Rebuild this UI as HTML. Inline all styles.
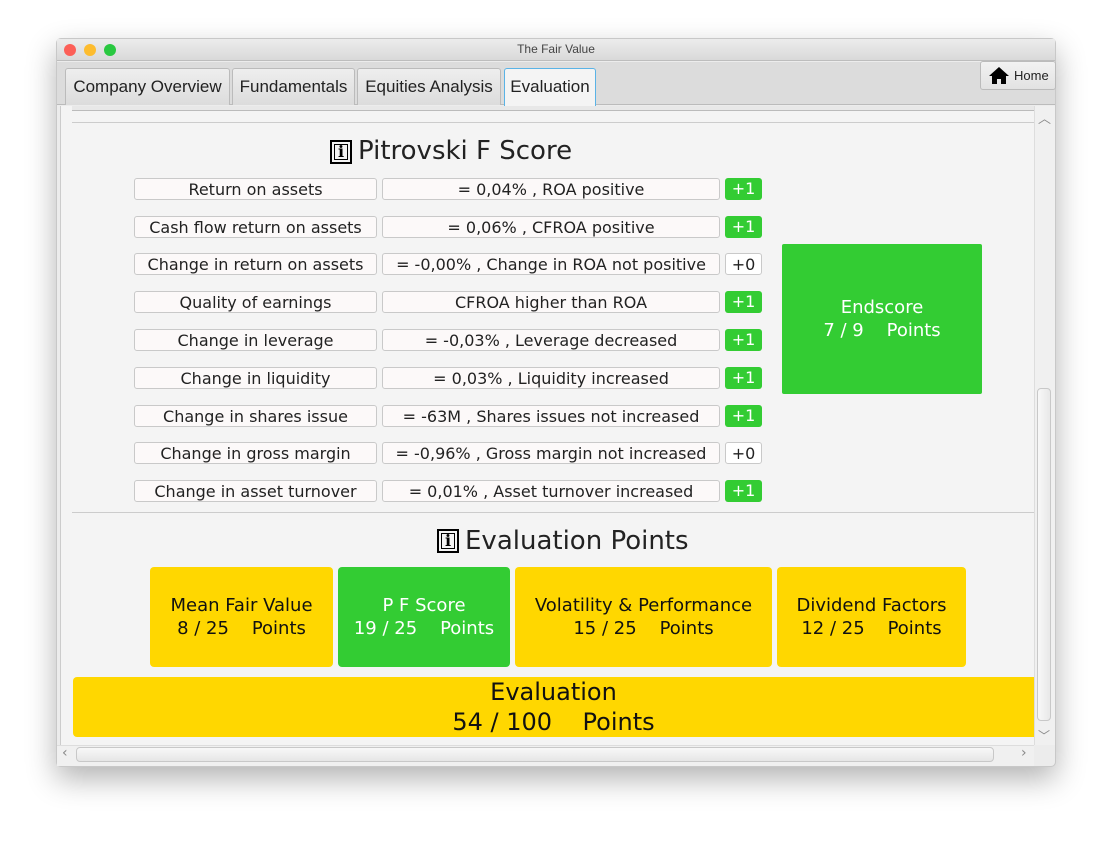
<!DOCTYPE html><html><head><style>
body{margin:0;width:1112px;height:841px;background:#fff;font-family:"DejaVu Sans","Liberation Sans",sans-serif;position:relative;overflow:hidden}
.a{position:absolute;box-sizing:border-box}
.win{left:56px;top:38px;width:1000px;height:729px;background:#ececec;border:1px solid #c8c8c8;border-radius:5px;box-shadow:0 12px 30px rgba(0,0,0,.3);overflow:hidden}
.tab{top:68px;height:37px;background:linear-gradient(#eee,#dcdcdc);border:1px solid #bbb;border-bottom:none;font-family:"Liberation Sans",sans-serif;font-size:17px;color:#222;text-align:center;line-height:36px;border-radius:3px 3px 0 0}
.lb{height:22px;background:#fcf9f9;border:1px solid #c9c9c9;border-radius:3px;font-size:16px;color:#222;text-align:center;line-height:21px;white-space:nowrap}
.bd{left:725px;width:37px;height:22px;border-radius:3px;font-size:16px;text-align:center;line-height:21px}
.g{background:#33cc33;color:#fff}
.z{background:#fff;border:1px solid #c9c9c9;color:#222}
.card{top:567px;height:100px;border-radius:4px;font-size:18px;color:#111;text-align:center;display:flex;flex-direction:column;justify-content:center;line-height:23px;white-space:pre}
.yl{background:#ffd700}
.ic{width:22px;height:24px;border:2px solid #000;outline:1px solid #000;outline-offset:-5px;font:bold 16px "DejaVu Serif",serif;text-align:center;line-height:20px}
</style></head><body>
<div class="a win"></div>
<div class="a" style="left:57px;top:39px;width:998px;height:22px;background:linear-gradient(#ececec,#d9d9d9);border-bottom:1px solid #bdbdbd;text-align:center;font:12px 'Liberation Sans',sans-serif;color:#444;line-height:21px">The Fair Value</div>
<div class="a" style="left:64px;top:44px;width:12px;height:12px;border-radius:50%;background:#fc5f57"></div>
<div class="a" style="left:84px;top:44px;width:12px;height:12px;border-radius:50%;background:#fdbc2e"></div>
<div class="a" style="left:104px;top:44px;width:12px;height:12px;border-radius:50%;background:#29c840"></div>
<div class="a" style="left:57px;top:62px;width:998px;height:43px;background:#dcdcdc;border-bottom:1px solid #bbb"></div>
<div class="a tab" style="left:65px;width:165px">Company Overview</div>
<div class="a tab" style="left:232px;width:123px">Fundamentals</div>
<div class="a tab" style="left:357px;width:144px">Equities Analysis</div>
<div class="a tab" style="left:504px;width:92px;background:#f4f4f4;border-color:#5ab3e6;height:38px">Evaluation</div>
<div class="a" style="left:980px;top:61px;width:76px;height:29px;background:linear-gradient(#f2f2f2,#e2e2e2);border:1px solid #bbb;border-radius:3px;font:13px 'Liberation Sans',sans-serif;color:#222;line-height:27px;padding-left:33px">Home</div>
<svg class="a" style="left:989px;top:67px" width="20" height="17" viewBox="0 0 20 17"><path d="M10 0L0 9h3v8h5v-5h4v5h5V9h3z" fill="#000"/></svg>
<div class="a" style="left:60px;top:106px;width:974px;height:639px;background:#f4f4f4;border-left:1px solid #ccc"></div>
<div class="a" style="left:72px;top:106px;width:962px;height:5px;border-bottom:1px solid #bbb;background:#e8e8e8"></div>
<div class="a" style="left:72px;top:122px;width:962px;height:1px;background:#ccc"></div>
<div class="a" style="left:1034px;top:106px;width:21px;height:639px;background:#f0f0f0;border-left:1px solid #ddd"></div>
<div class="a" style="left:1037px;top:388px;width:14px;height:333px;background:linear-gradient(90deg,#f8f8f8,#e8e8e8);border:1px solid #c8c8c8;border-radius:4px"></div>
<div class="a" style="left:1038px;top:108px;font-size:13px;color:#888">︿</div>
<div class="a" style="left:1038px;top:727px;font-size:12px;color:#888">﹀</div>
<div class="a" style="left:57px;top:745px;width:977px;height:21px;background:#f0f0f0;border-top:1px solid #ddd"></div>
<div class="a" style="left:76px;top:747px;width:918px;height:15px;background:linear-gradient(#f8f8f8,#e6e6e6);border:1px solid #c8c8c8;border-radius:4px"></div>
<div class="a" style="left:62px;top:745px;font-size:14px;color:#888">‹</div>
<div class="a" style="left:1021px;top:745px;font-size:14px;color:#888">›</div>

<div class="a ic" style="left:330px;top:140px">i</div>
<div class="a" style="left:358px;top:136px;font-size:26px;color:#222">Pitrovski F Score</div>

<div class="a lb" style="left:134px;top:178px;width:243px">Return on assets</div><div class="a lb" style="left:382px;top:178px;width:338px">= 0,04% , ROA positive</div><div class="a bd g" style="top:178px">+1</div>
<div class="a lb" style="left:134px;top:216px;width:243px">Cash flow return on assets</div><div class="a lb" style="left:382px;top:216px;width:338px">= 0,06% , CFROA positive</div><div class="a bd g" style="top:216px">+1</div>
<div class="a lb" style="left:134px;top:253px;width:243px">Change in return on assets</div><div class="a lb" style="left:382px;top:253px;width:338px">= -0,00% , Change in ROA not positive</div><div class="a bd z" style="top:253px">+0</div>
<div class="a lb" style="left:134px;top:291px;width:243px">Quality of earnings</div><div class="a lb" style="left:382px;top:291px;width:338px">CFROA higher than ROA</div><div class="a bd g" style="top:291px">+1</div>
<div class="a lb" style="left:134px;top:329px;width:243px">Change in leverage</div><div class="a lb" style="left:382px;top:329px;width:338px">= -0,03% , Leverage decreased</div><div class="a bd g" style="top:329px">+1</div>
<div class="a lb" style="left:134px;top:367px;width:243px">Change in liquidity</div><div class="a lb" style="left:382px;top:367px;width:338px">= 0,03% , Liquidity increased</div><div class="a bd g" style="top:367px">+1</div>
<div class="a lb" style="left:134px;top:405px;width:243px">Change in shares issue</div><div class="a lb" style="left:382px;top:405px;width:338px">= -63M , Shares issues not increased</div><div class="a bd g" style="top:405px">+1</div>
<div class="a lb" style="left:134px;top:442px;width:243px">Change in gross margin</div><div class="a lb" style="left:382px;top:442px;width:338px">= -0,96% , Gross margin not increased</div><div class="a bd z" style="top:442px">+0</div>
<div class="a lb" style="left:134px;top:480px;width:243px">Change in asset turnover</div><div class="a lb" style="left:382px;top:480px;width:338px">= 0,01% , Asset turnover increased</div><div class="a bd g" style="top:480px">+1</div>

<div class="a card g" style="left:782px;top:244px;width:200px;height:150px;border-radius:2px;color:#fff">Endscore
7 / 9    Points</div>

<div class="a" style="left:72px;top:512px;width:962px;height:1px;background:#ccc"></div>
<div class="a ic" style="left:437px;top:529px">i</div>
<div class="a" style="left:465px;top:526px;font-size:26px;color:#222">Evaluation Points</div>

<div class="a card yl" style="left:150px;width:183px">Mean Fair Value
8 / 25    Points</div>
<div class="a card g" style="left:338px;width:172px;color:#fff">P F Score
19 / 25    Points</div>
<div class="a card yl" style="left:515px;width:257px">Volatility &amp; Performance
15 / 25    Points</div>
<div class="a card yl" style="left:777px;width:189px">Dividend Factors
12 / 25    Points</div>
<div class="a card yl" style="left:73px;top:677px;width:961px;height:60px;border-radius:4px 0 0 4px;font-size:24px;line-height:30px">Evaluation
54 / 100    Points</div>
</body></html>
